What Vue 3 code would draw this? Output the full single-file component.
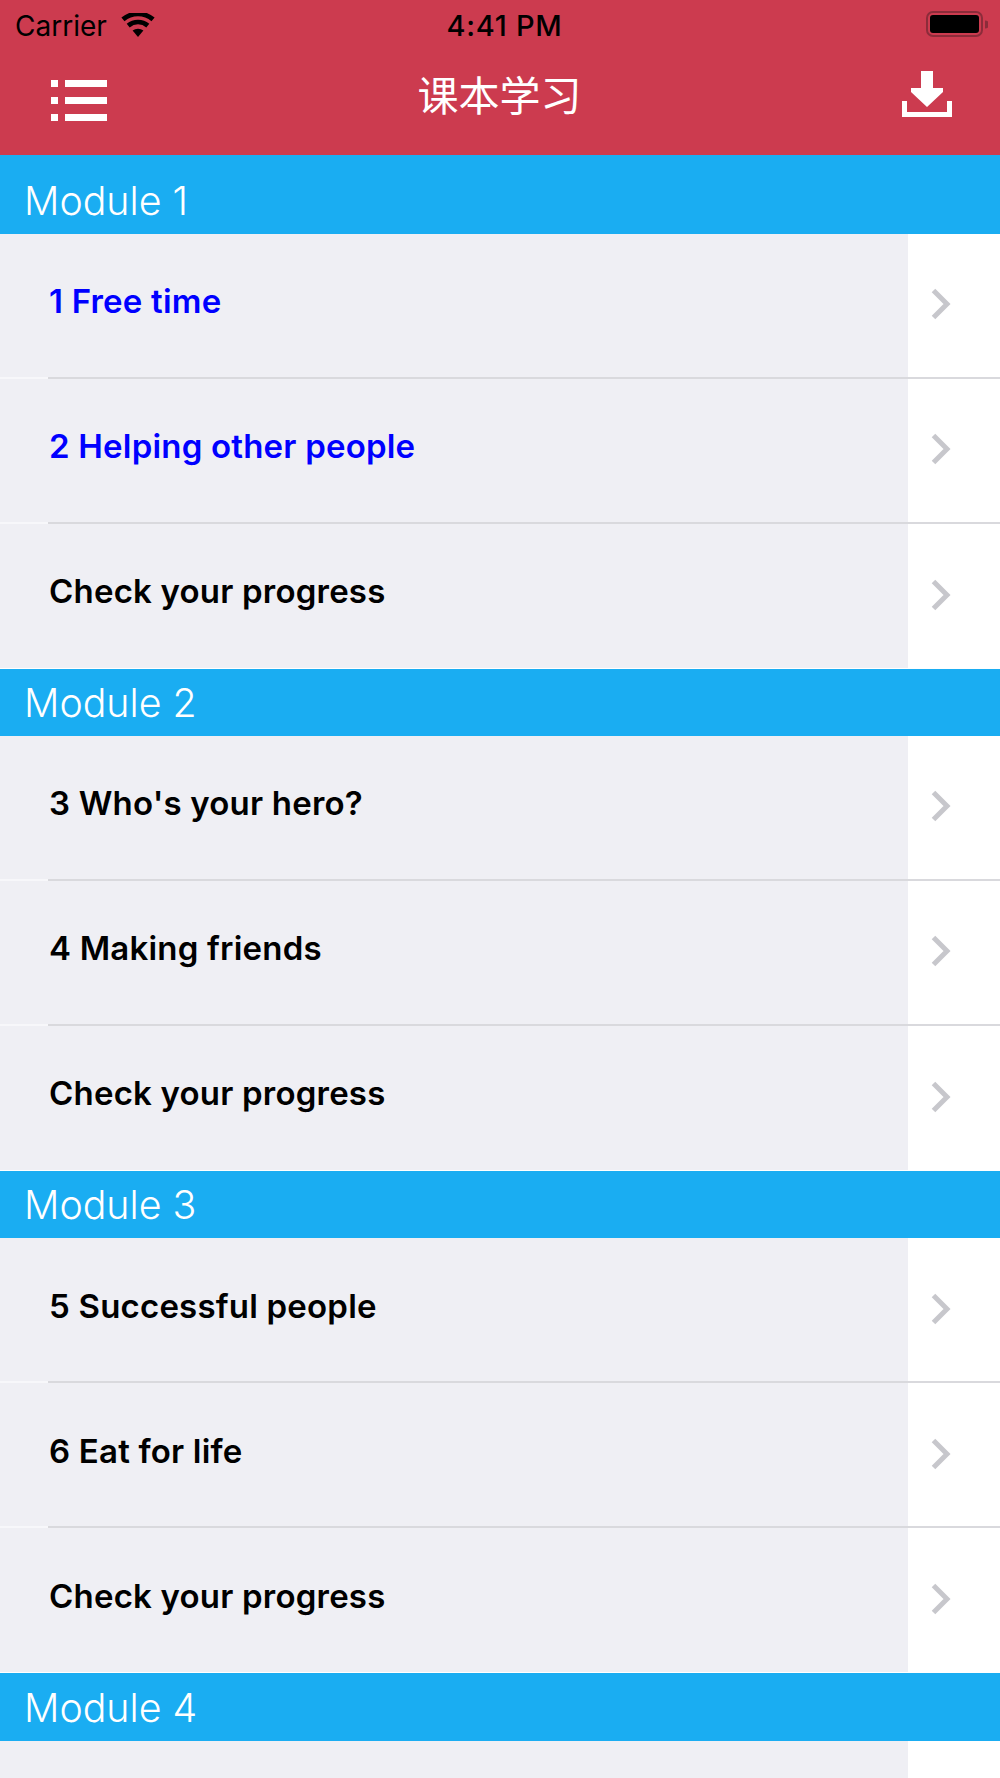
<template>
  <div class="page">
    <header class="top">
      <div class="status">
        <div class="status-left">
          <span>Carrier</span>
          <svg class="wifi" width="34" height="24" viewBox="0 0 34 24">
            <path d="M17 24 L11.6 17.6 A8.6 8.6 0 0 1 22.4 17.6 Z" fill="#000" />
            <path d="M8.7 14.4 L5.7 10.8 A17.4 17.4 0 0 1 28.3 10.8 L25.3 14.4 A12.8 12.8 0 0 0 8.7 14.4 Z" fill="#000" />
            <path d="M3.5 8.2 L0.4 4.6 A25.6 25.6 0 0 1 33.6 4.6 L30.5 8.2 A21 21 0 0 0 3.5 8.2 Z" fill="#000" />
          </svg>
        </div>
        <div class="time">4:41 PM</div>
        <div class="status-right">
          <svg class="battery" width="62" height="26" viewBox="0 0 62 26">
            <rect x="1" y="1" width="55" height="24" rx="6" fill="none" stroke="#8c2c3a" stroke-width="2" />
            <rect x="4" y="4" width="49" height="18" rx="3" fill="#000" />
            <path d="M59 9.5 A3.5 3.5 0 0 1 59 17.5 Z" fill="#8c2c3a" />
          </svg>
        </div>
      </div>
      <nav class="nav">
        <svg class="menu-icon" width="56" height="41" viewBox="0 0 56 41" fill="#fff">
          <rect x="0" y="0" width="7" height="7" />
          <rect x="0" y="17" width="7" height="7" />
          <rect x="0" y="34" width="7" height="7" />
          <rect x="14" y="0" width="42" height="7" />
          <rect x="14" y="17" width="42" height="7" />
          <rect x="14" y="34" width="42" height="7" />
        </svg>
        <div class="title">课本学习</div>
        <svg class="down-icon" width="50" height="46" viewBox="0 0 50 46" fill="#fff">
          <path d="M19 0 H31 V17 H41 V21 L25 36 L9 21 V17 H19 Z" />
          <path d="M0 30 H5 V41 H45 V30 H50 V46 H0 Z" />
        </svg>
      </nav>
    </header>

    <section v-for="(mod, i) in modules" :key="mod.name">
      <div class="mod-head" :class="{ first: i === 0 }">{{ mod.name }}</div>
      <div v-for="(row, j) in mod.rows" :key="j" class="row">
        <div class="row-body">
          <div class="row-text" :class="{ done: row.done }">{{ row.text }}</div>
          <div class="row-arrow">
            <svg width="20" height="32" viewBox="0 0 20 32">
              <path d="M2.5 2.5 L16 16 L2.5 29.5" fill="none" stroke="#c7c7cc" stroke-width="5" />
            </svg>
          </div>
        </div>
        <div class="row-line" :class="{ last: j === mod.rows.length - 1 }"></div>
      </div>
    </section>
  </div>
</template>

<script setup>
const modules = [
  {
    name: 'Module 1',
    rows: [
      { text: '1 Free time', done: true },
      { text: '2 Helping other people', done: true },
      { text: 'Check your progress' }
    ]
  },
  {
    name: 'Module 2',
    rows: [
      { text: "3 Who's your hero?" },
      { text: '4 Making friends' },
      { text: 'Check your progress' }
    ]
  },
  {
    name: 'Module 3',
    rows: [
      { text: '5 Successful people' },
      { text: '6 Eat for life' },
      { text: 'Check your progress' }
    ]
  },
  {
    name: 'Module 4',
    rows: [{ text: '' }]
  }
]
</script>

<style>
html,
body {
  margin: 0;
  background: #fff;
}
</style>

<style scoped>
.page {
  width: 1000px;
  height: 1778px;
  overflow: hidden;
  font-family: Inter, "Noto Sans", sans-serif;
}

.top {
  background: #cc3b4f;
}

.status {
  height: 53px;
  box-sizing: border-box;
  display: grid;
  grid-template-columns: 1fr auto 1fr;
  align-items: center;
  padding: 0 12px 2px 15px;
  color: #000;
  font-size: 28px;
}

.status-left {
  display: flex;
  align-items: center;
  gap: 14px;
}

.wifi {
  margin-bottom: 2px;
}

.time {
  margin-left: 6px;
  font-size: 29px;
  font-weight: 500;
  letter-spacing: 0.7px;
}

.status-right {
  display: flex;
  justify-content: flex-end;
}

.battery {
  margin-bottom: 3px;
}

.nav {
  height: 102px;
  display: grid;
  grid-template-columns: 1fr auto 1fr;
  align-items: start;
  padding: 0 48px 0 51px;
}

.menu-icon {
  margin-top: 27px;
}

.down-icon {
  margin-top: 18px;
  justify-self: end;
}

.title {
  margin: 11px 4px 0 0;
  color: #fff;
  font-family: "Noto Sans CJK SC", sans-serif;
  font-size: 41px;
  line-height: 58px;
}

.mod-head {
  height: 67.4px;
  box-sizing: border-box;
  padding: 0 0 8px 24px;
  display: flex;
  align-items: flex-end;
  background: #1aadf2;
  color: #fff;
  font-size: 39.3px;
  font-weight: 300;
  line-height: 50px;
}

.mod-head.first {
  height: 78.6px;
}

.row {
  height: 145px;
  display: flex;
  flex-direction: column;
}

.row-body {
  flex: 1;
  display: flex;
  min-height: 0;
}

.row-text {
  width: 908px;
  box-sizing: border-box;
  padding: 45.5px 0 0 49px;
  background: #efeff4;
  color: #000;
  font-size: 33px;
  font-weight: 600;
  letter-spacing: 0.2px;
  line-height: 45px;
}

.row-text.done {
  color: #0000ff;
}

.row-arrow {
  flex: 1;
  display: flex;
  justify-content: flex-end;
  align-items: center;
  padding: 0 49px 2px 0;
}

.row-line {
  height: 2px;
  background: linear-gradient(to right, #f7f7fa 48px, #d9d9dd 48px);
}

.row-line.last {
  height: 1px;
  background: #fff;
}
</style>
